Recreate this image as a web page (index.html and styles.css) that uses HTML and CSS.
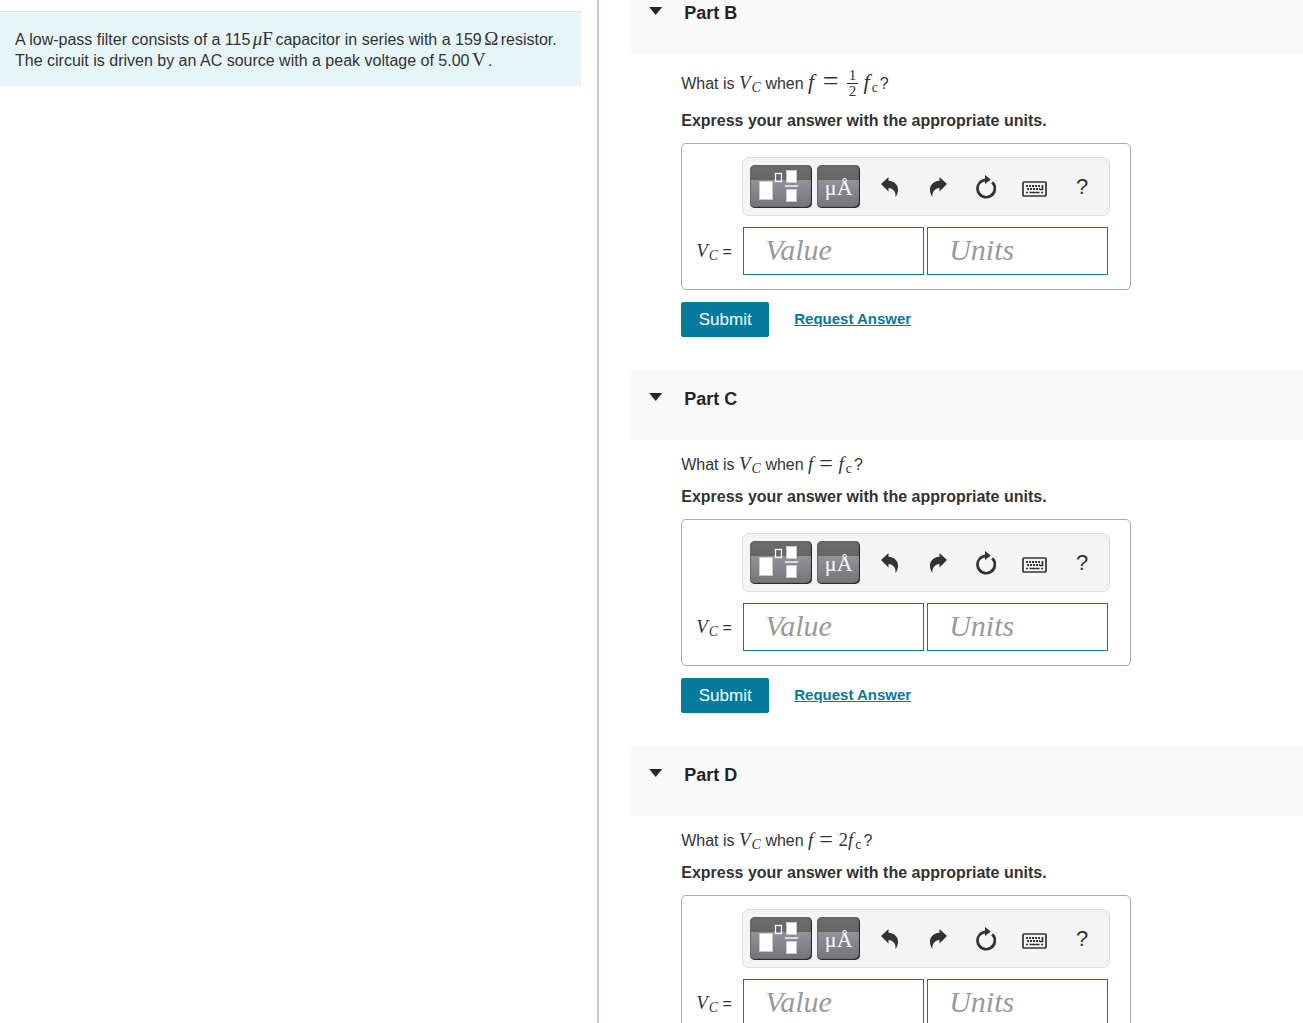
FILE: index.html
```html
<!DOCTYPE html>
<html lang="en">
<head>
    <meta charset="UTF-8">
    <meta name="viewport" content="width=device-width, initial-scale=1.0">
    <title>Low-Pass Filter</title>
    <link rel="stylesheet" href="styles.css">
</head>
<body>
    <!-- shared icons -->
    <svg class="sprite" aria-hidden="true">
        <symbol id="icon-template" viewBox="0 0 62 43">
            <g fill="#fff" stroke="#c9c9cf" stroke-width="1">
                <rect x="9.500" y="16.500" width="13" height="18"/>
                <rect x="36.500" y="5.500" width="10" height="12"/>
                <rect x="36.500" y="24.500" width="10" height="12"/>
            </g>
            <rect x="25.500" y="8.500" width="6" height="8" fill="none" stroke="#fff" stroke-width="1.300"/>
            <path d="M35 21H48" stroke="#dcdce0" stroke-width="2"/>
        </symbol>
        <symbol id="icon-undo" viewBox="0 0 18 20">
            <path d="M0 7L7.500 0V3.800C13.500 4.200 17.300 8 17 13C17 15.500 16 18 14.500 20C15 15.500 13 11.500 7.500 11V14.500Z" fill="#333"/>
        </symbol>
        <symbol id="icon-redo" viewBox="0 0 18 20">
            <path d="M18 7L10.500 0V3.800C4.500 4.200 .700 8 1 13C1 15.500 2 18 3.500 20C3 15.500 5 11.500 10.500 11V14.500Z" fill="#333"/>
        </symbol>
        <symbol id="icon-reset" viewBox="0 0 20 24">
            <path d="M10.500 4.800A8.700 8.700 0 1 0 16.200 7.200" fill="none" stroke="#333" stroke-width="2.700"/>
            <path d="M9 0L14.800 4.500L9 9Z" fill="#333"/>
        </symbol>
        <symbol id="icon-keyboard" viewBox="0 0 25 16">
            <rect x="1" y="1" width="23" height="14" rx="1" fill="none" stroke="#333" stroke-width="1.700"/>
            <path d="M4 5H19M5 8H18" stroke="#333" stroke-width="2" stroke-dasharray="2 1"/>
            <path d="M4 11.500H6M7.500 11.500H17.500M19 11.500H21M20.500 4V9M18 8.500H21" stroke="#333" stroke-width="1.700"/>
        </symbol>
    </svg>

    <div class="page">
        <aside class="problem">
            <p class="problem-text">
                A low-pass filter consists of a 115 <span class="unit"><i>μ</i>F</span> capacitor in series with a 159 <span class="unit">Ω</span> resistor.<br>
                The circuit is driven by an AC source with a peak voltage of 5.00 <span class="unit">V</span> .
            </p>
        </aside>

        <main class="parts">
            <section class="part">
                <header class="part-header scrolled">
                    <button class="toggle" aria-label="Collapse Part B"></button>
                    <h2>Part B</h2>
                </header>
                <div class="part-body">
                    <p class="question tall">What is <span class="math">V<sub>C</sub></span> when <span class="math large">f <span class="eq">=</span> <span class="frac"><span>1</span><span>2</span></span> f<sub class="roman">c</sub></span>?</p>
                    <p class="instruction">Express your answer with the appropriate units.</p>
                    <form class="answer">
                        <div class="toolbar">
                            <button type="button" class="tool wide" aria-label="Templates"><svg width="62" height="43"><use href="#icon-template"/></svg></button>
                            <button type="button" class="tool">μÅ</button>
                            <div class="actions">
                                <button type="button" aria-label="Undo"><svg width="18" height="20"><use href="#icon-undo"/></svg></button>
                                <button type="button" aria-label="Redo"><svg width="18" height="20"><use href="#icon-redo"/></svg></button>
                                <button type="button" aria-label="Reset"><svg width="20" height="24"><use href="#icon-reset"/></svg></button>
                                <button type="button" class="keyboard" aria-label="Keyboard shortcuts"><svg width="25" height="16"><use href="#icon-keyboard"/></svg></button>
                                <button type="button" aria-label="Help">?</button>
                            </div>
                        </div>
                        <label for="value-b"><span class="math">V<sub>C</sub></span> =</label>
                        <div class="fields">
                            <input type="text" id="value-b" placeholder="Value">
                            <input type="text" aria-label="Units" placeholder="Units">
                        </div>
                    </form>
                    <div class="controls">
                        <button class="submit">Submit</button>
                        <a href="#">Request Answer</a>
                    </div>
                </div>
            </section>

            <section class="part">
                <header class="part-header">
                    <button class="toggle" aria-label="Collapse Part C"></button>
                    <h2>Part C</h2>
                </header>
                <div class="part-body">
                    <p class="question">What is <span class="math">V<sub>C</sub></span> when <span class="math">f <span class="eq">=</span> f<sub class="roman">c</sub></span>?</p>
                    <p class="instruction">Express your answer with the appropriate units.</p>
                    <form class="answer">
                        <div class="toolbar">
                            <button type="button" class="tool wide" aria-label="Templates"><svg width="62" height="43"><use href="#icon-template"/></svg></button>
                            <button type="button" class="tool">μÅ</button>
                            <div class="actions">
                                <button type="button" aria-label="Undo"><svg width="18" height="20"><use href="#icon-undo"/></svg></button>
                                <button type="button" aria-label="Redo"><svg width="18" height="20"><use href="#icon-redo"/></svg></button>
                                <button type="button" aria-label="Reset"><svg width="20" height="24"><use href="#icon-reset"/></svg></button>
                                <button type="button" class="keyboard" aria-label="Keyboard shortcuts"><svg width="25" height="16"><use href="#icon-keyboard"/></svg></button>
                                <button type="button" aria-label="Help">?</button>
                            </div>
                        </div>
                        <label for="value-c"><span class="math">V<sub>C</sub></span> =</label>
                        <div class="fields">
                            <input type="text" id="value-c" placeholder="Value">
                            <input type="text" aria-label="Units" placeholder="Units">
                        </div>
                    </form>
                    <div class="controls">
                        <button class="submit">Submit</button>
                        <a href="#">Request Answer</a>
                    </div>
                </div>
            </section>

            <section class="part">
                <header class="part-header">
                    <button class="toggle" aria-label="Collapse Part D"></button>
                    <h2>Part D</h2>
                </header>
                <div class="part-body">
                    <p class="question">What is <span class="math">V<sub>C</sub></span> when <span class="math">f <span class="eq">=</span> <span class="num">2</span>f<sub class="roman">c</sub></span>?</p>
                    <p class="instruction">Express your answer with the appropriate units.</p>
                    <form class="answer">
                        <div class="toolbar">
                            <button type="button" class="tool wide" aria-label="Templates"><svg width="62" height="43"><use href="#icon-template"/></svg></button>
                            <button type="button" class="tool">μÅ</button>
                            <div class="actions">
                                <button type="button" aria-label="Undo"><svg width="18" height="20"><use href="#icon-undo"/></svg></button>
                                <button type="button" aria-label="Redo"><svg width="18" height="20"><use href="#icon-redo"/></svg></button>
                                <button type="button" aria-label="Reset"><svg width="20" height="24"><use href="#icon-reset"/></svg></button>
                                <button type="button" class="keyboard" aria-label="Keyboard shortcuts"><svg width="25" height="16"><use href="#icon-keyboard"/></svg></button>
                                <button type="button" aria-label="Help">?</button>
                            </div>
                        </div>
                        <label for="value-d"><span class="math">V<sub>C</sub></span> =</label>
                        <div class="fields">
                            <input type="text" id="value-d" placeholder="Value">
                            <input type="text" aria-label="Units" placeholder="Units">
                        </div>
                    </form>
                </div>
            </section>
        </main>
    </div>
</body>
</html>
```
FILE: styles.css
```css
* {
    margin: 0;
    padding: 0;
    box-sizing: border-box;
}

body {
    font-family: "Liberation Sans", Arial, sans-serif;
    font-size: 16px;
    line-height: 20px;
    color: #333;
    background: #fff;
}

button {
    border: none;
    background: none;
    font-family: inherit;
    color: inherit;
    cursor: pointer;
}

.sprite {
    display: none;
}

.page {
    display: grid;
    grid-template-columns: 11fr 13fr;
    height: 100vh;
}

/* left pane */
.problem {
    padding: 11px 16px 0 0;
}

.problem-text {
    padding: 17px 15px 15px;
    background: #e6f5f6;
    border-top: 1px solid #dbe2e3;
    line-height: 21px;
}

.unit {
    margin: 0 -2px;
    font-family: "Liberation Serif", serif;
    font-size: 19px;
    line-height: 1;
}

/* right pane */
.parts {
    border-left: 2px solid #b8cbdf;
    padding-left: 32px;
    overflow: hidden;
}

.part-header {
    display: flex;
    align-items: flex-start;
    gap: 22px;
    height: 70px;
    padding: 19px 18px 0;
    background: #f9f9f9;
    color: #252525;
}

.part-header.scrolled {
    height: 54px;
    padding-top: 3px;
}

.toggle {
    width: 13px;
    height: 8px;
    margin-top: 4px;
    background: #252525;
    clip-path: polygon(0 0, 100% 0, 50% 100%);
}

.part-header h2 {
    font-size: 18px;
    line-height: 20px;
}

.part-body {
    padding: 14px 50px 33px;
}

.question {
    height: 20px;
    margin-bottom: 13px;
    white-space: nowrap;
}

.question.tall {
    height: 30px;
    line-height: 28px;
}

.instruction {
    margin-bottom: 12px;
    font-weight: bold;
}

.math {
    font-family: "Liberation Serif", serif;
    font-size: 19px;
    font-style: italic;
    line-height: 1;
}

.math.large {
    font-size: 22px;
}

.math sub {
    margin-left: 1px;
    font-size: 14px;
    line-height: 0;
    vertical-align: -3px;
}

.math .roman {
    margin-left: 2px;
    margin-right: 2px;
}

.math .roman,
.math .num,
.math .eq {
    font-style: normal;
}

.math .eq {
    margin: 0 1px;
    font-size: 24px;
    line-height: 0;
    vertical-align: -1px;
}

.math.large .eq {
    margin: 0 3px;
    font-size: 28px;
}

.frac {
    display: inline-flex;
    flex-direction: column;
    width: 11px;
    vertical-align: middle;
    font-size: 15px;
    font-style: normal;
    line-height: 15px;
    text-align: center;
}

.frac span:first-child {
    border-bottom: 1px solid #333;
}

/* answer box */
.answer {
    display: grid;
    grid-template-columns: 46px 1fr;
    row-gap: 11px;
    align-items: center;
    max-width: 450px;
    padding: 13px 20px 14px 14px;
    border: 1px solid #a9a9a9;
    border-radius: 5px;
}

.toolbar {
    grid-column: 2;
    display: flex;
    gap: 5px;
    padding: 7px 3px 7px 7px;
    background: #f4f4f4;
    border: 1px solid #dcdcdc;
    border-radius: 7px;
}

.tool {
    width: 43px;
    height: 43px;
    padding-top: 3px;
    border-radius: 5px;
    background: linear-gradient(#6b6b6b, #666 34%, #92929b 36%, #737378);
    box-shadow: inset -1px -1px 1px #222, inset 1px 1px 1px #666;
    color: #fff;
    font-family: "Liberation Serif", serif;
    font-size: 22px;
}

.tool.wide {
    width: 62px;
    padding: 0;
}

.tool svg {
    display: block;
}

.actions {
    flex: 1;
    display: flex;
    margin-left: 1px;
}

.actions button {
    display: flex;
    align-items: center;
    justify-content: center;
    width: 48px;
    height: 43px;
    font-size: 22px;
}

.actions .keyboard {
    padding-top: 5px;
}

.fields {
    display: grid;
    grid-template-columns: 1fr 1fr;
    gap: 3px;
    padding: 0 2px 0 1px;
}

.fields input {
    width: 100%;
    height: 48px;
    padding: 0 0 2px 21px;
    border: 1px solid #047a9c;
    font-family: "Liberation Serif", serif;
    font-size: 30px;
    font-style: italic;
}

.fields input::placeholder {
    color: #999;
}

.controls {
    display: flex;
    align-items: center;
    gap: 25px;
    margin-top: 12px;
}

.submit {
    width: 88px;
    height: 35px;
    border-radius: 2px;
    background: #047a9c;
    color: #fff;
    font-size: 17px;
}

.controls a {
    padding-bottom: 2px;
    color: #047a9c;
    font-size: 15px;
    font-weight: bold;
}
```
